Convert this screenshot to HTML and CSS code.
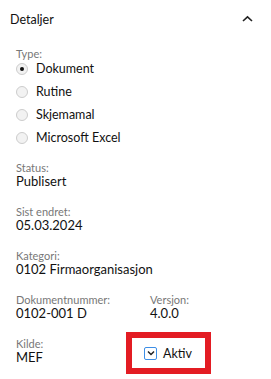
FILE: index.html
```html
<!DOCTYPE html>
<html>
<head>
	<title>Detaljer</title>
	<link rel="stylesheet" href="styles.css">
</head>
<body>
	<div id="panel">
		<!-- header with collapse arrow -->
		<div class="header">
			<span>Detaljer</span>
			<svg class="chevron" width="11" height="7" viewBox="0 0 11 7"><path d="M1 6 L5.5 1.8 L10 6" fill="none" stroke="#222" stroke-width="1.6"/></svg>
		</div>
		<div class="body">
			<div class="label">Type:</div>
			<div class="radios">
				<div class="radio checked"><span class="dot"></span>Dokument</div>
				<div class="radio"><span class="dot"></span>Rutine</div>
				<div class="radio"><span class="dot"></span>Skjemamal</div>
				<div class="radio"><span class="dot"></span>Microsoft Excel</div>
			</div>
			<div class="field">
				<div class="label">Status:</div>
				<div class="value">Publisert</div>
			</div>
			<div class="field">
				<div class="label">Sist endret:</div>
				<div class="value">05.03.2024</div>
			</div>
			<div class="field">
				<div class="label">Kategori:</div>
				<div class="value">0102 Firmaorganisasjon</div>
			</div>
			<div class="row">
				<div class="field col">
					<div class="label">Dokumentnummer:</div>
					<div class="value">0102-001 D</div>
				</div>
				<div class="field">
					<div class="label">Versjon:</div>
					<div class="value">4.0.0</div>
				</div>
			</div>
			<div class="row">
				<div class="field col2">
					<div class="label">Kilde:</div>
					<div class="value">MEF</div>
				</div>
				<div class="highlight">
					<span class="check"><svg width="8" height="6" viewBox="0 0 8 6"><path d="M1 1.5 L4 4.5 L7 1.5" fill="none" stroke="#222" stroke-width="1.5"/></svg></span>
					<span class="value aktiv">Aktiv</span>
				</div>
			</div>
		</div>
	</div>
</body>
</html>
```

FILE: styles.css
```css
body{
	margin: 0;
	font-family: "Lato", "Liberation Sans", sans-serif;
	color: #111;
	background: #fff;
}
#panel{
	width: 271px;
}
.header{
	display: flex;
	justify-content: space-between;
	align-items: center;
	height: 38px;
	padding: 0 18px 0 10px;
	font-size: 12.5px;
}
.chevron{
	margin-top: -1px;
}
.body{
	padding: 9px 16px 0 16px;
}
.label{
	font-size: 11px;
	color: #777;
	line-height: 13px;
}
.value{
	font-size: 13px;
	line-height: 15px;
}
.radios{
	margin-top: -3px;
}
.radio{
	display: flex;
	align-items: center;
	height: 23px;
	font-size: 12.5px;
}
.dot{
	width: 10px;
	height: 10px;
	border: 1px solid #ccc;
	border-radius: 50%;
	background: #f2f2f2;
	margin-right: 8px;
	display: flex;
	align-items: center;
	justify-content: center;
}
.checked .dot::after{
	content: "";
	width: 4px;
	height: 4px;
	border-radius: 50%;
	background: #111;
}
.field{
	margin-top: 16px;
}
.radios + .field{
	margin-top: 12px;
}
.row{
	display: flex;
}
.col{
	width: 134px;
}
.col2{
	width: 110px;
}
.highlight{
	display: flex;
	align-items: center;
	box-sizing: border-box;
	width: 85px;
	height: 42px;
	border: 6px solid #e31c23;
	padding-left: 12px;
	margin-top: 11px;
}
.check{
	box-sizing: border-box;
	width: 13px;
	height: 13px;
	border: 1px solid #3d8ee6;
	border-radius: 2px;
	display: flex;
	align-items: center;
	justify-content: center;
	margin-right: 6px;
}
.aktiv{
	font-size: 12.5px;
}
```
